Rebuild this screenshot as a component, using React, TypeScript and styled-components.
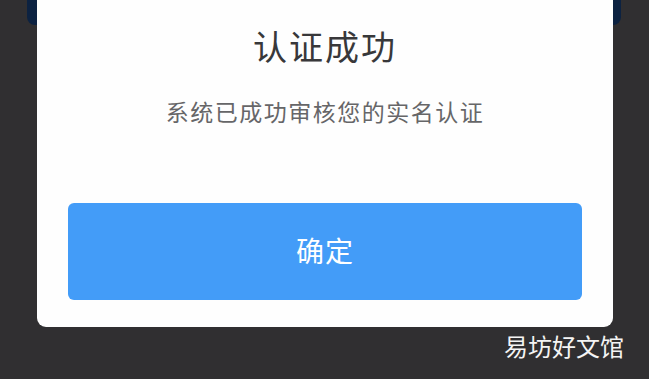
import React from "react";
import styled, { createGlobalStyle } from "styled-components";

const GlobalStyle = createGlobalStyle`
  html, body {
    margin: 0;
    padding: 0;
    background: #302f31;
    width: 649px;
    height: 379px;
    overflow: hidden;
  }
  body {
    font-family: "Noto Sans CJK SC", "Noto Sans", sans-serif;
  }
`;

const Page = styled.div`
  position: relative;
  width: 649px;
  height: 379px;
  display: flex;
  flex-direction: column;
  background: #302f31;
`;

const BackSheet = styled.div`
  position: absolute;
  top: 0;
  left: 27px;
  width: 594px;
  height: 25px;
  background: #0c2241;
  border-radius: 0 0 8px 8px;
`;

const Card = styled.div`
  position: relative;
  margin: 0 36px 0 37px;
  height: 327px;
  box-sizing: border-box;
  background: #fefefe;
  border-radius: 0 0 9px 9px;
  padding: 22px 31px 27px;
  display: flex;
  flex-direction: column;
  align-items: center;
`;

const Title = styled.h1`
  margin: 0;
  font-size: 34px;
  font-weight: 400;
  line-height: 48px;
  letter-spacing: 2px;
  color: #38383a;
`;

const Message = styled.p`
  margin: 25px 0 0;
  font-size: 23px;
  line-height: 32px;
  letter-spacing: 1.5px;
  color: #666668;
`;

const ConfirmButton = styled.button`
  margin-top: auto;
  width: 100%;
  height: 97px;
  padding: 0 0 3px;
  border: none;
  border-radius: 6px;
  background: #439cf8;
  color: #ffffff;
  font-family: "Noto Sans CJK SC", "Noto Sans", sans-serif;
  font-size: 28px;
  letter-spacing: 1px;
  cursor: pointer;
`;

const Watermark = styled.div`
  display: flex;
  justify-content: flex-end;
  padding: 4px 25px 0 0;
  font-size: 24px;
  line-height: 30px;
  color: #f4f4f4;
`;

export default function App() {
  return (
    <>
      <GlobalStyle />
      <Page>
        <BackSheet />
        <Card>
          <Title>认证成功</Title>
          <Message>系统已成功审核您的实名认证</Message>
          <ConfirmButton>确定</ConfirmButton>
        </Card>
        <Watermark>易坊好文馆</Watermark>
      </Page>
    </>
  );
}
